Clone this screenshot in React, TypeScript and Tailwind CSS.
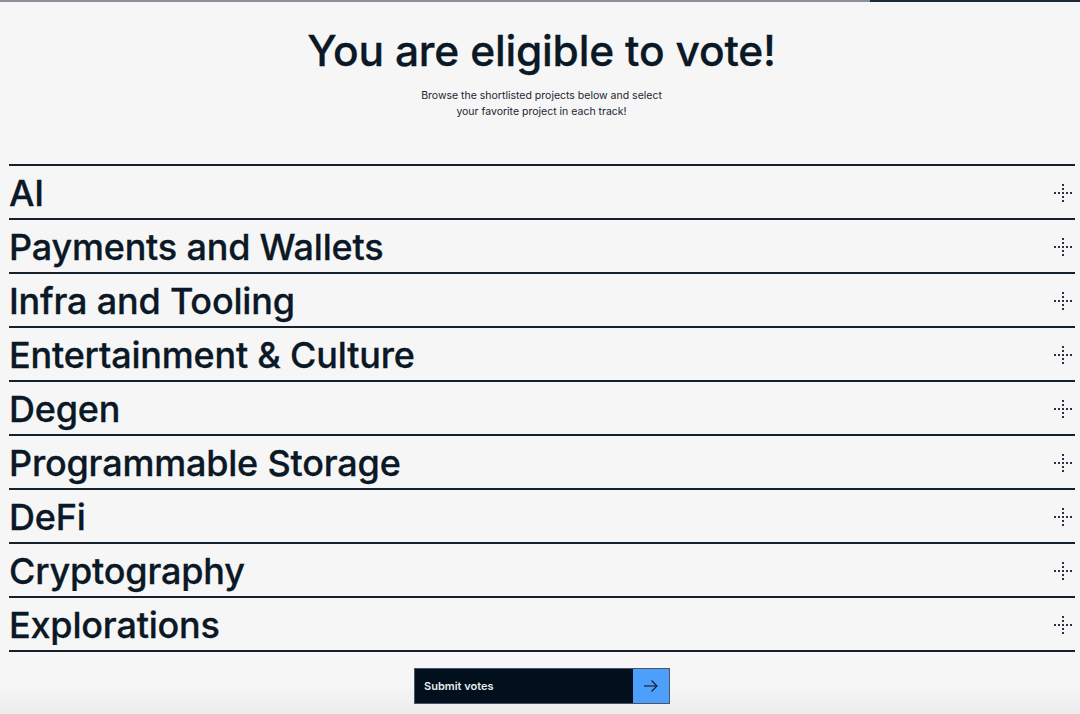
import React from "react";

const tracks = [
  "AI",
  "Payments and Wallets",
  "Infra and Tooling",
  "Entertainment & Culture",
  "Degen",
  "Programmable Storage",
  "DeFi",
  "Cryptography",
  "Explorations",
];

function DottedPlus() {
  const dots: [number, number][] = [];
  for (let i = 0; i < 5; i++) {
    dots.push([1 + i * 4, 9]);
    if (i !== 2) dots.push([9, 1 + i * 4]);
  }
  return (
    <svg width="20" height="20" viewBox="0 0 20 20" className="text-[#2a3440]">
      {dots.map(([x, y], i) => (
        <rect key={i} x={x} y={y} width="2" height="2" fill="currentColor" />
      ))}
    </svg>
  );
}

export default function App() {
  return (
    <div
      className="relative min-h-[714px] bg-[#f6f6f6] text-[#0b1826]"
      style={{ fontFamily: "Inter, 'Noto Sans', sans-serif" }}
    >
      {/* bottom fade, behind content */}
      <div className="pointer-events-none absolute bottom-0 left-0 right-0 h-[30px] bg-gradient-to-b from-transparent to-[#ececec]" />

      <div className="relative">
        {/* progress bar */}
        <div className="flex h-[2px]">
          <div className="h-full w-[870px] bg-[#8a9099]" />
          <div className="h-full flex-1 bg-[#1c2a3a]" />
        </div>

        {/* Header */}
        <div className="flex flex-col items-center pl-[3px] pt-[25px]">
          <h1 className="text-[42.5px] font-medium leading-[48px] tracking-[-0.2px] [-webkit-text-stroke:0.3px_#0b1826]">
            You are eligible to vote!
          </h1>
          <p className="mt-[13px] text-center text-[10.5px] leading-[16px] text-[#1a2531]">
            Browse the shortlisted projects below and select
            <br />
            your favorite project in each track!
          </p>
        </div>

        {/* Tracks */}
        <div className="mt-[44px] pl-[9px] pr-[5px]">
          <div className="border-t-2 border-[#16212e]">
            {tracks.map((t) => (
              <div
                key={t}
                className="flex items-center justify-between border-b-2 border-[#16212e] pb-[7px] pt-[9px]"
              >
                <span className="text-[36px] font-medium leading-[36px] tracking-[-0.2px] [-webkit-text-stroke:0.3px_#0b1826]">
                  {t}
                </span>
                <span className="mr-[2px] flex items-center">
                  <DottedPlus />
                </span>
              </div>
            ))}
          </div>
        </div>

        {/* Submit */}
        <div className="mt-[16px] flex justify-center pb-[10px] pl-[4px]">
          <button className="flex h-[36px] w-[256px] items-stretch border border-[#4b5563] bg-[#020f1c]">
            <span className="flex flex-1 items-center pl-[9px] text-[11px] font-semibold text-[#e8ecef]">
              Submit votes
            </span>
            <span className="flex w-[36px] items-center justify-center bg-[#4d9ffc]">
              <svg width="16" height="14" viewBox="0 0 16 14" fill="none" stroke="#0b1826" strokeWidth="1.1">
                <path d="M1 7h13" />
                <path d="M8.5 1.5L14 7l-5.5 5.5" />
              </svg>
            </span>
          </button>
        </div>
      </div>
    </div>
  );
}
